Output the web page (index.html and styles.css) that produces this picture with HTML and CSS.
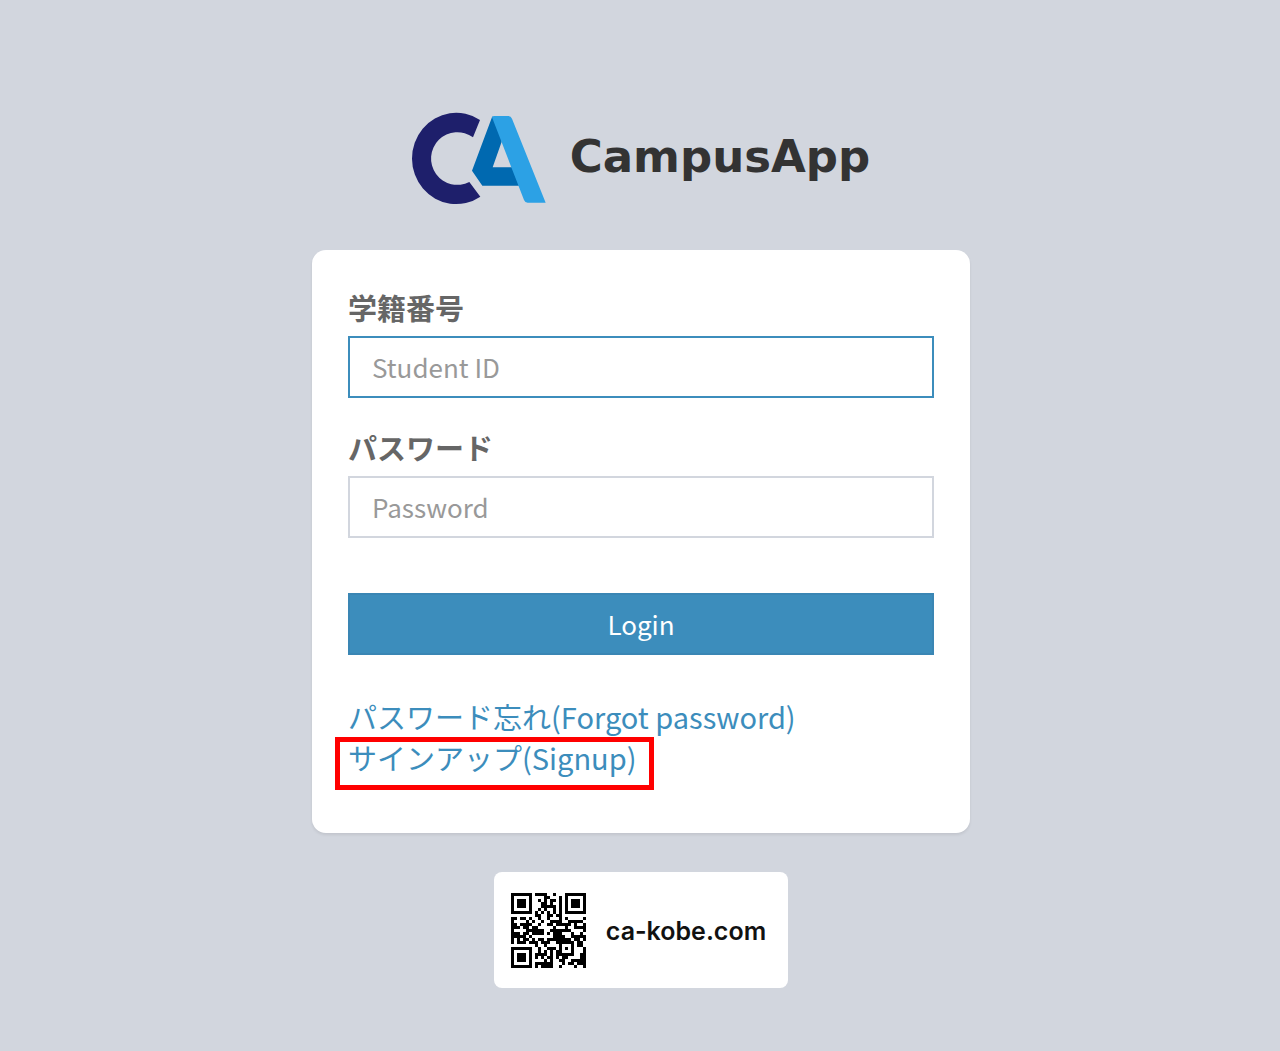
FILE: index.html
```html
<!DOCTYPE html>
<html lang="ja">
<head>
  <meta charset="utf-8">
  <meta name="viewport" content="width=device-width, initial-scale=1">
  <title>CampusApp</title>
  <link rel="stylesheet" href="styles.css">
</head>
<body>
  <main class="page">
    <h1 class="brand">
      <svg class="brand-mark" viewBox="39 39 402 276" aria-hidden="true">
        <path fill="#1e1f6b" d="M243 60A132.5 137 0 1 0 244 290L211 246A79 79 0 1 1 222 112Z"/>
        <path fill="#0069b0" d="M280 49L219 212L250 257H360L345 202H281L308 125L302 80Z"/>
        <path fill="#2ca1e5" d="M279 52Q281 48 286 48H328Q336 48 339 56L440 308H386Q378 308 375 300Z"/>
      </svg>
      <span class="brand-name">CampusApp</span>
    </h1>

    <section class="card">
      <form>
        <div class="field">
          <label for="student-id">学籍番号</label>
          <input class="is-active" type="text" id="student-id" placeholder="Student ID">
        </div>
        <div class="field">
          <label for="password">パスワード</label>
          <input type="password" id="password" placeholder="Password">
        </div>
        <button class="login" type="submit">Login</button>
      </form>
      <nav class="links">
        <a href="#forgot">パスワード忘れ(Forgot password)</a>
        <a class="marked" href="#signup">サインアップ(Signup)</a>
      </nav>
    </section>

    <aside class="site">
      <svg class="site-code" viewBox="0 0 25 25" role="img" aria-label="QR" shape-rendering="crispEdges"><path id="qr"/></svg>
      <span class="site-name">ca-kobe.com</span>
    </aside>
  </main>
  <script src="qr.js"></script>
</body>
</html>
```
FILE: styles.css
```css
* {
  box-sizing: border-box;
}

body {
  margin: 0;
  background: #d2d6de;
  color: #666;
  font-family: "Noto Sans CJK JP", "Liberation Sans", sans-serif;
}

.page {
  display: flex;
  flex-direction: column;
  align-items: center;
  padding: 113px 14px 60px 16px;
}

.brand {
  display: flex;
  align-items: center;
  gap: 24px;
  margin: 0 0 45px;
}

.brand-mark {
  width: 134px;
  height: 92px;
  overflow: visible;
}

.brand-name {
  padding-bottom: 4px;
  color: #333;
  font: bold 45px/60px "DejaVu Sans", sans-serif;
}

.card {
  width: 100%;
  max-width: 658px;
  padding: 38px 36px 55px;
  border-radius: 14px;
  background: #fff;
  box-shadow: 0 2px 3px rgba(0, 0, 0, 0.08);
}

.field {
  margin-bottom: 30px;
}

.field label {
  display: block;
  margin-bottom: 10px;
  font-size: 29px;
  font-weight: bold;
  line-height: 38px;
}

.field input {
  display: block;
  width: 100%;
  height: 62px;
  padding: 0 22px 2px;
  border: 2px solid #d2d6de;
  border-radius: 0;
  outline: 0;
  background: #fff;
  color: #555;
  font: 26px/40px "Noto Sans CJK JP", sans-serif;
}

.field input.is-active {
  border-color: #3c8dbc;
}

.field input::placeholder {
  color: #999;
}

.login {
  display: block;
  width: 100%;
  height: 62px;
  margin-top: 55px;
  padding: 0;
  border: 2px solid #3a86b4;
  background: #3c8dbc;
  color: #fff;
  font: 26px/40px "Noto Sans CJK JP", sans-serif;
}

.links {
  display: flex;
  flex-direction: column;
  align-items: flex-start;
  margin-top: 41px;
  font-size: 29px;
  line-height: 41px;
}

.links a {
  color: #3c8dbc;
  text-decoration: none;
}

.marked {
  position: relative;
}

.marked::after {
  content: "";
  position: absolute;
  inset: 0 -17px -12px -13px;
  border: 5px solid #f00;
}

.site {
  display: flex;
  align-items: center;
  gap: 20px;
  margin-top: 39px;
  padding: 21px 22px 20px 17px;
  border-radius: 8px;
  background: #fff;
}

.site-code {
  width: 75px;
  height: 75px;
}

.site-name {
  color: #111;
  font: 600 25px/40px Inter, sans-serif;
}
```
FILE: qr.js
```js
// Version 2-L QR code, byte mode, single block.
function qrModules(text, mask) {
  const N = 25, EC = 10, DATA = 34;
  const exp = [], log = [];
  for (let i = 0, x = 1; i < 255; i++) {
    exp[i] = x;
    log[x] = i;
    x <<= 1;
    if (x & 256) x ^= 0x11d;
  }
  const mul = (a, b) => a && b ? exp[(log[a] + log[b]) % 255] : 0;

  const bits = [];
  const put = (v, n) => { for (let i = n - 1; i >= 0; i--) bits.push(v >> i & 1); };
  put(4, 4);
  put(text.length, 8);
  for (const c of text) put(c.charCodeAt(0), 8);
  put(0, 4);
  for (let p = 236; bits.length < DATA * 8; p ^= 236 ^ 17) put(p, 8);

  // Reed-Solomon remainder
  const data = [];
  for (let i = 0; i < bits.length; i += 8) data.push(parseInt(bits.slice(i, i + 8).join(''), 2));
  let gen = [1];
  for (let i = 0; i < EC; i++) {
    const next = gen.concat(0);
    gen.forEach((g, j) => { next[j + 1] ^= mul(g, exp[i]); });
    gen = next;
  }
  const rem = data.concat(Array(EC).fill(0));
  for (let i = 0; i < DATA; i++) {
    const f = rem[i];
    gen.forEach((g, j) => { rem[i + j] ^= mul(g, f); });
  }
  rem.slice(DATA).forEach(b => put(b, 8));

  // Fixed patterns
  const m = Array.from({ length: N }, () => Array(N).fill(0));
  const used = Array.from({ length: N }, () => Array(N).fill(false));
  const set = (x, y, v) => {
    if (x < 0 || y < 0 || x >= N || y >= N) return;
    m[y][x] = v ? 1 : 0;
    used[y][x] = true;
  };
  for (let i = 0; i < N; i++) { set(6, i, i % 2 === 0); set(i, 6, i % 2 === 0); }
  for (const [cx, cy] of [[3, 3], [21, 3], [3, 21]])
    for (let dy = -4; dy <= 4; dy++)
      for (let dx = -4; dx <= 4; dx++) {
        const d = Math.max(Math.abs(dx), Math.abs(dy));
        set(cx + dx, cy + dy, d !== 2 && d !== 4);
      }
  for (let dy = -2; dy <= 2; dy++)
    for (let dx = -2; dx <= 2; dx++)
      set(18 + dx, 18 + dy, Math.max(Math.abs(dx), Math.abs(dy)) !== 1);

  // Format information
  const fd = 1 << 3 | mask;
  let r = fd;
  for (let i = 0; i < 10; i++) r = r << 1 ^ (r >> 9) * 0x537;
  const f = (fd << 10 | r) ^ 0x5412;
  const b = i => f >> i & 1;
  for (let i = 0; i < 6; i++) set(8, i, b(i));
  set(8, 7, b(6));
  set(8, 8, b(7));
  set(7, 8, b(8));
  for (let i = 9; i < 15; i++) set(14 - i, 8, b(i));
  for (let i = 0; i < 8; i++) set(N - 1 - i, 8, b(i));
  for (let i = 8; i < 15; i++) set(8, N - 15 + i, b(i));
  set(8, N - 8, 1);

  // Zigzag data placement with mask pattern 6
  let k = 0;
  for (let right = N - 1; right >= 1; right -= 2) {
    if (right === 6) right = 5;
    for (let v = 0; v < N; v++)
      for (let j = 0; j < 2; j++) {
        const x = right - j;
        const y = ((right + 1) & 2) === 0 ? N - 1 - v : v;
        if (used[y][x]) continue;
        const flip = (x * y % 2 + x * y % 3) % 2 === 0 ? 1 : 0;
        m[y][x] = (bits[k++] || 0) ^ flip;
      }
  }
  return m;
}

let d = '';
qrModules('https://ca-kobe.com/', 6).forEach((row, y) =>
  row.forEach((on, x) => { if (on) d += `M${x} ${y}h1v1h-1z`; }));
document.getElementById('qr').setAttribute('d', d);
```
